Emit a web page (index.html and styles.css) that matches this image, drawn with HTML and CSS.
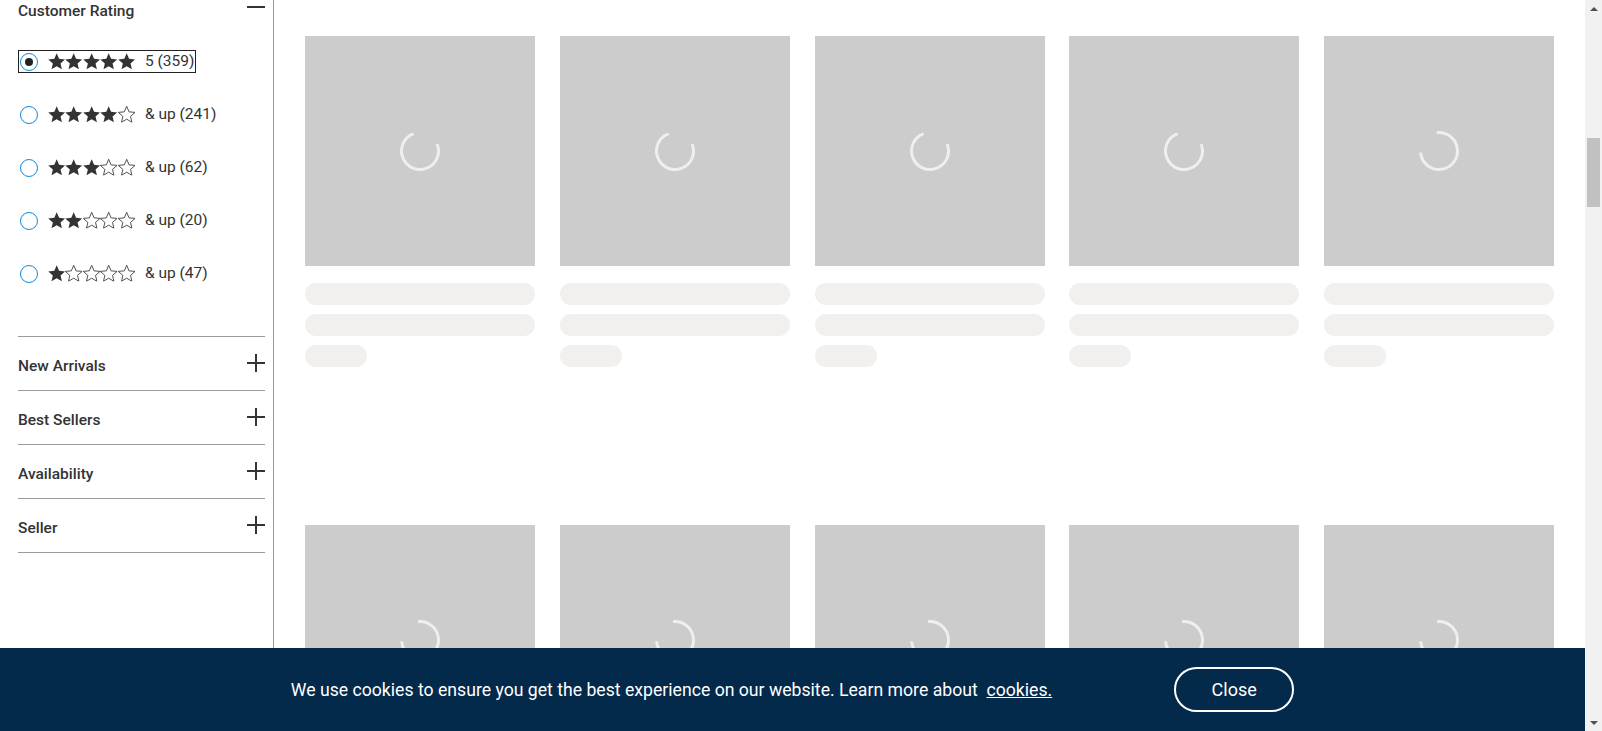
FILE: index.html
```html
<!DOCTYPE html>
<html lang="en">
<head>
<meta charset="utf-8">
<title>Products</title>
<link rel="stylesheet" href="styles.css">
</head>
<body>
<svg class="defs" width="0" height="0" aria-hidden="true">
  <symbol id="star" viewBox="1.7 1.7 20.6 19.6">
    <path d="M12 17.27L18.18 21l-1.64-7.03L22 9.24l-7.19-.61L12 2 9.19 8.63 2 9.24l5.46 4.73L5.82 21z"/>
  </symbol>
  <symbol id="spin" viewBox="0 0 40 40">
    <circle cx="20" cy="20" r="18.5"/>
  </symbol>
</svg>

<div class="page">
  <div class="viewport">
    <aside class="sidebar">
      <div class="facet-head">
        <span class="facet-title">Customer Rating</span>
        <svg class="icon-minus" viewBox="0 0 18 14" width="18" height="14"><path d="M0 7h18"/></svg>
      </div>

      <ul class="rating-list">
        <li>
          <label class="rating focused">
            <span class="radio checked"></span>
            <span class="stars">
              <svg class="star full"><use href="#star"/></svg><svg class="star full"><use href="#star"/></svg><svg class="star full"><use href="#star"/></svg><svg class="star full"><use href="#star"/></svg><svg class="star full"><use href="#star"/></svg>
            </span>
            <span class="count">5 (359)</span>
          </label>
        </li>
        <li>
          <label class="rating">
            <span class="radio"></span>
            <span class="stars">
              <svg class="star full"><use href="#star"/></svg><svg class="star full"><use href="#star"/></svg><svg class="star full"><use href="#star"/></svg><svg class="star full"><use href="#star"/></svg><svg class="star empty"><use href="#star"/></svg>
            </span>
            <span class="count">&amp; up (241)</span>
          </label>
        </li>
        <li>
          <label class="rating">
            <span class="radio"></span>
            <span class="stars">
              <svg class="star full"><use href="#star"/></svg><svg class="star full"><use href="#star"/></svg><svg class="star full"><use href="#star"/></svg><svg class="star empty"><use href="#star"/></svg><svg class="star empty"><use href="#star"/></svg>
            </span>
            <span class="count">&amp; up (62)</span>
          </label>
        </li>
        <li>
          <label class="rating">
            <span class="radio"></span>
            <span class="stars">
              <svg class="star full"><use href="#star"/></svg><svg class="star full"><use href="#star"/></svg><svg class="star empty"><use href="#star"/></svg><svg class="star empty"><use href="#star"/></svg><svg class="star empty"><use href="#star"/></svg>
            </span>
            <span class="count">&amp; up (20)</span>
          </label>
        </li>
        <li>
          <label class="rating">
            <span class="radio"></span>
            <span class="stars">
              <svg class="star full"><use href="#star"/></svg><svg class="star empty"><use href="#star"/></svg><svg class="star empty"><use href="#star"/></svg><svg class="star empty"><use href="#star"/></svg><svg class="star empty"><use href="#star"/></svg>
            </span>
            <span class="count">&amp; up (47)</span>
          </label>
        </li>
      </ul>

      <div class="facets">
        <div class="facet">
          <span class="facet-name">New Arrivals</span>
          <svg class="icon-plus" viewBox="0 0 18 18" width="18" height="18"><path d="M0 9h18M9 0v18"/></svg>
        </div>
        <div class="facet">
          <span class="facet-name">Best Sellers</span>
          <svg class="icon-plus" viewBox="0 0 18 18" width="18" height="18"><path d="M0 9h18M9 0v18"/></svg>
        </div>
        <div class="facet">
          <span class="facet-name">Availability</span>
          <svg class="icon-plus" viewBox="0 0 18 18" width="18" height="18"><path d="M0 9h18M9 0v18"/></svg>
        </div>
        <div class="facet">
          <span class="facet-name">Seller</span>
          <svg class="icon-plus" viewBox="0 0 18 18" width="18" height="18"><path d="M0 9h18M9 0v18"/></svg>
        </div>
      </div>
    </aside>

    <main class="content">
      <div class="grid">
        <div class="card"><div class="img"><svg class="spinner rot-a"><use href="#spin"/></svg></div><div class="bar"></div><div class="bar"></div><div class="bar short"></div></div>
        <div class="card"><div class="img"><svg class="spinner rot-a"><use href="#spin"/></svg></div><div class="bar"></div><div class="bar"></div><div class="bar short"></div></div>
        <div class="card"><div class="img"><svg class="spinner rot-a"><use href="#spin"/></svg></div><div class="bar"></div><div class="bar"></div><div class="bar short"></div></div>
        <div class="card"><div class="img"><svg class="spinner rot-a"><use href="#spin"/></svg></div><div class="bar"></div><div class="bar"></div><div class="bar short"></div></div>
        <div class="card"><div class="img"><svg class="spinner rot-b"><use href="#spin"/></svg></div><div class="bar"></div><div class="bar"></div><div class="bar short"></div></div>
        <div class="card"><div class="img"><svg class="spinner rot-c"><use href="#spin"/></svg></div><div class="bar"></div><div class="bar"></div><div class="bar short"></div></div>
        <div class="card"><div class="img"><svg class="spinner rot-c"><use href="#spin"/></svg></div><div class="bar"></div><div class="bar"></div><div class="bar short"></div></div>
        <div class="card"><div class="img"><svg class="spinner rot-c"><use href="#spin"/></svg></div><div class="bar"></div><div class="bar"></div><div class="bar short"></div></div>
        <div class="card"><div class="img"><svg class="spinner rot-c"><use href="#spin"/></svg></div><div class="bar"></div><div class="bar"></div><div class="bar short"></div></div>
        <div class="card"><div class="img"><svg class="spinner rot-c"><use href="#spin"/></svg></div><div class="bar"></div><div class="bar"></div><div class="bar short"></div></div>
      </div>
    </main>
  </div>

  <div class="scrollbar">
    <div class="sb-btn"><span class="arrow-up"></span></div>
    <div class="sb-track"><div class="sb-thumb"></div></div>
    <div class="sb-btn"><span class="arrow-down"></span></div>
  </div>
</div>

<div class="cookie-banner">
  <p class="cookie-text">We use cookies to ensure you get the best experience on our website. Learn more about&nbsp; <a href="#">cookies.</a></p>
  <button class="close-btn" type="button">Close</button>
</div>
</body>
</html>
```

FILE: styles.css
```css
html, body {
  margin: 0;
  padding: 0;
  height: 100%;
  overflow: hidden;
}

body {
  font-family: Roboto, "Liberation Sans", sans-serif;
  color: #333;
  background: #fff;
}

.defs {
  position: absolute;
  width: 0;
  height: 0;
  overflow: hidden;
}

.page {
  display: flex;
  height: 731px;
}

.viewport {
  flex: 1;
  display: flex;
  min-width: 0;
}

/* ---------- Sidebar ---------- */
.sidebar {
  flex-shrink: 0;
  width: 247px;
  padding: 0 8px 0 18px;
  border-right: 1px solid #9a9a9a;
}

.facet-head {
  display: flex;
  justify-content: space-between;
  align-items: flex-start;
  height: 20px;
}

.facet-title {
  font-size: 15.5px;
  font-weight: 500;
  line-height: 20px;
  padding-top: 1px;
}

.icon-minus,
.icon-plus {
  fill: none;
  stroke: #333;
  stroke-width: 2;
}

.rating-list {
  list-style: none;
  margin: 0;
  padding: 30px 0 0;
  display: flex;
  flex-direction: column;
  gap: 30px;
}

.rating-list li {
  display: flex;
}

.rating {
  display: flex;
  align-items: center;
  height: 21px;
  border: 1px solid transparent;
  padding-right: 1px;
}

.rating.focused {
  border-color: #222;
}

.radio {
  box-sizing: border-box;
  width: 18px;
  height: 18px;
  margin-left: 1px;
  margin-right: 10px;
  border: 1.6px solid #1289d6;
  border-radius: 50%;
  display: flex;
  align-items: center;
  justify-content: center;
}

.radio.checked::after {
  content: "";
  width: 8px;
  height: 8px;
  border-radius: 50%;
  background: #222;
}

.stars {
  display: flex;
  margin-right: 10px;
}

.star {
  width: 17.4px;
  height: 16.6px;
}

.star.full {
  fill: #333;
}

.star.empty {
  fill: #fff;
  stroke: #444;
  stroke-width: 1.1;
}

.count {
  font-size: 15.5px;
  line-height: 21px;
}

.facets {
  margin-top: 51px;
}

.facet {
  display: flex;
  justify-content: space-between;
  align-items: flex-start;
  height: 53px;
  border-top: 1px solid #9a9a9a;
}

.facet:last-child {
  border-bottom: 1px solid #9a9a9a;
}

.facet-name {
  font-size: 15.5px;
  font-weight: 500;
  line-height: 20px;
  margin-top: 19px;
}

.icon-plus {
  margin-top: 17px;
}

/* ---------- Product grid ---------- */
.content {
  flex: 1;
  min-width: 0;
  padding: 36px 31px 0;
}

.grid {
  display: grid;
  grid-template-columns: repeat(5, 230px);
  justify-content: space-between;
  row-gap: 158px;
}

.img {
  height: 230px;
  background: #cccccc;
  display: flex;
  align-items: center;
  justify-content: center;
}

.spinner {
  width: 40px;
  height: 40px;
  fill: none;
  stroke: #efefef;
  stroke-width: 3;
  stroke-dasharray: 87.2 116.3;
}

.rot-a { transform: rotate(-22deg); }
.rot-b { transform: rotate(-97deg); }
.rot-c { transform: rotate(-96deg); }

.bar {
  height: 22px;
  border-radius: 11px;
  background: #f1f0ef;
  margin-top: 9px;
}

.img + .bar {
  margin-top: 17px;
}

.bar.short {
  width: 62px;
}

/* ---------- Scrollbar ---------- */
.scrollbar {
  width: 17px;
  flex-shrink: 0;
  background: #f1f1f1;
  display: flex;
  flex-direction: column;
}

.sb-btn {
  height: 17px;
  display: flex;
  align-items: center;
  justify-content: center;
}

.arrow-up {
  width: 0;
  height: 0;
  border-left: 4px solid transparent;
  border-right: 4px solid transparent;
  border-bottom: 4px solid #505050;
}

.arrow-down {
  width: 0;
  height: 0;
  border-left: 4px solid transparent;
  border-right: 4px solid transparent;
  border-top: 4px solid #505050;
}

.sb-track {
  flex: 1;
  padding: 0 2px;
}

.sb-thumb {
  margin-top: 121px;
  height: 69px;
  background: #c1c1c1;
}

/* ---------- Cookie banner ---------- */
.cookie-banner {
  position: fixed;
  left: 0;
  right: 17px;
  bottom: 0;
  height: 83px;
  background: #03294b;
  color: #fff;
  display: flex;
  align-items: center;
  justify-content: center;
  gap: 122px;
}

.cookie-text {
  margin: 0;
  font-size: 17.65px;
  line-height: 22px;
}

.cookie-text a {
  color: #fff;
  text-decoration: underline;
}

.close-btn {
  box-sizing: border-box;
  width: 120px;
  height: 45px;
  border: 2px solid #fff;
  border-radius: 23px;
  background: transparent;
  color: #fff;
  font-family: Roboto, "Liberation Sans", sans-serif;
  font-size: 18px;
  cursor: pointer;
}
```
